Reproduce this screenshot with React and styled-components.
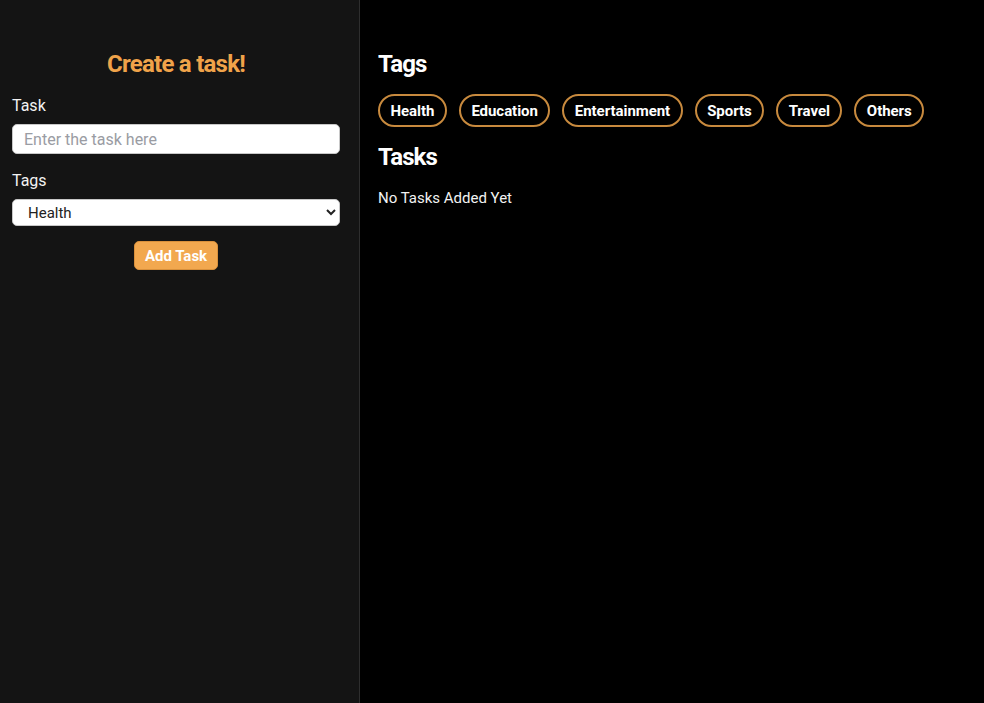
import React, { useState } from "react";
import styled, { createGlobalStyle } from "styled-components";

const Global = createGlobalStyle`
  html, body { margin: 0; padding: 0; background: #000; }
  body { font-family: Roboto, "Noto Sans", sans-serif; color: #fff; }
  * { box-sizing: border-box; }
`;

const Layout = styled.div`
  display: flex;
  height: 100vh;
  width: 100%;
`;

const Sidebar = styled.aside`
  width: 360px;
  flex: 0 0 360px;
  background: #141414;
  border-right: 1px solid #2e2e2e;
  padding: 50px 19px 0 12px;
  display: flex;
  flex-direction: column;
`;

const Title = styled.h2`
  margin: 0 0 18px;
  font-size: 24px;
  line-height: 28px;
  font-weight: 700;
  letter-spacing: -0.75px;
  color: #f0a34a;
  text-align: center;
`;

const Label = styled.label`
  display: block;
  font-size: 16px;
  line-height: 19px;
  color: #f2f2f2;
  margin-bottom: ${(p) => p.$gap}px;
`;

const TextInput = styled.input`
  width: 100%;
  height: 30px;
  border: 1px solid #c8c8c8;
  border-radius: 5px;
  padding: 0 11px;
  font-family: Roboto, sans-serif;
  font-size: 16px;
  color: #222;
  background: #fff;
  outline: none;
  margin-bottom: 17px;
  &::placeholder { color: #9a9ca3; }
`;

const Select = styled.select`
  width: 100%;
  height: 27px;
  border: 1px solid #c8c8c8;
  border-radius: 5px;
  padding: 0 11px;
  font-family: Roboto, sans-serif;
  font-size: 15px;
  color: #222;
  background: #fff;
  margin-bottom: 15px;
`;

const AddButton = styled.button`
  align-self: center;
  height: 29px;
  padding: 0 10px;
  border: 1px solid #d8903c;
  border-radius: 5px;
  background: #f2a84f;
  color: #fff;
  font-family: Roboto, sans-serif;
  font-weight: 700;
  font-size: 15px;
  cursor: pointer;
`;

const Main = styled.main`
  flex: 1;
  background: #000;
  padding: 50px 18px 0;
`;

const Heading = styled.h2`
  margin: 0 0 ${(p) => p.$gap}px;
  font-size: 24px;
  line-height: 28px;
  font-weight: 700;
  letter-spacing: -0.9px;
  color: #fff;
`;

const TagRow = styled.div`
  display: flex;
  gap: 12px;
  margin-bottom: 16px;
`;

const Chip = styled.button`
  height: 33px;
  padding: 0 10.5px;
  border: 2px solid #c88a3e;
  border-radius: 17px;
  background: transparent;
  color: #fff;
  font-family: Roboto, sans-serif;
  font-weight: 700;
  font-size: 15px;
  letter-spacing: -0.05px;
  cursor: pointer;
`;

const Empty = styled.p`
  margin: 0;
  font-size: 15px;
  line-height: 18px;
  color: #f2f2f2;
`;

const TAGS = ["Health", "Education", "Entertainment", "Sports", "Travel", "Others"];

export default function App() {
  const [tag, setTag] = useState("Health");
  return (
    <>
      <Global />
      <Layout>
        <Sidebar>
          <Title>Create a task!</Title>
          <Label htmlFor="task" $gap={9}>Task</Label>
          <TextInput id="task" placeholder="Enter the task here" />
          <Label htmlFor="tag" $gap={9}>Tags</Label>
          <Select id="tag" value={tag} onChange={(e) => setTag(e.target.value)}>
            {TAGS.map((t) => (
              <option key={t}>{t}</option>
            ))}
          </Select>
          <AddButton>Add Task</AddButton>
        </Sidebar>
        <Main>
          <Heading $gap={16}>Tags</Heading>
          <TagRow>
            {TAGS.map((t) => (
              <Chip key={t}>{t}</Chip>
            ))}
          </TagRow>
          <Heading $gap={18}>Tasks</Heading>
          <Empty>No Tasks Added Yet</Empty>
        </Main>
      </Layout>
    </>
  );
}
